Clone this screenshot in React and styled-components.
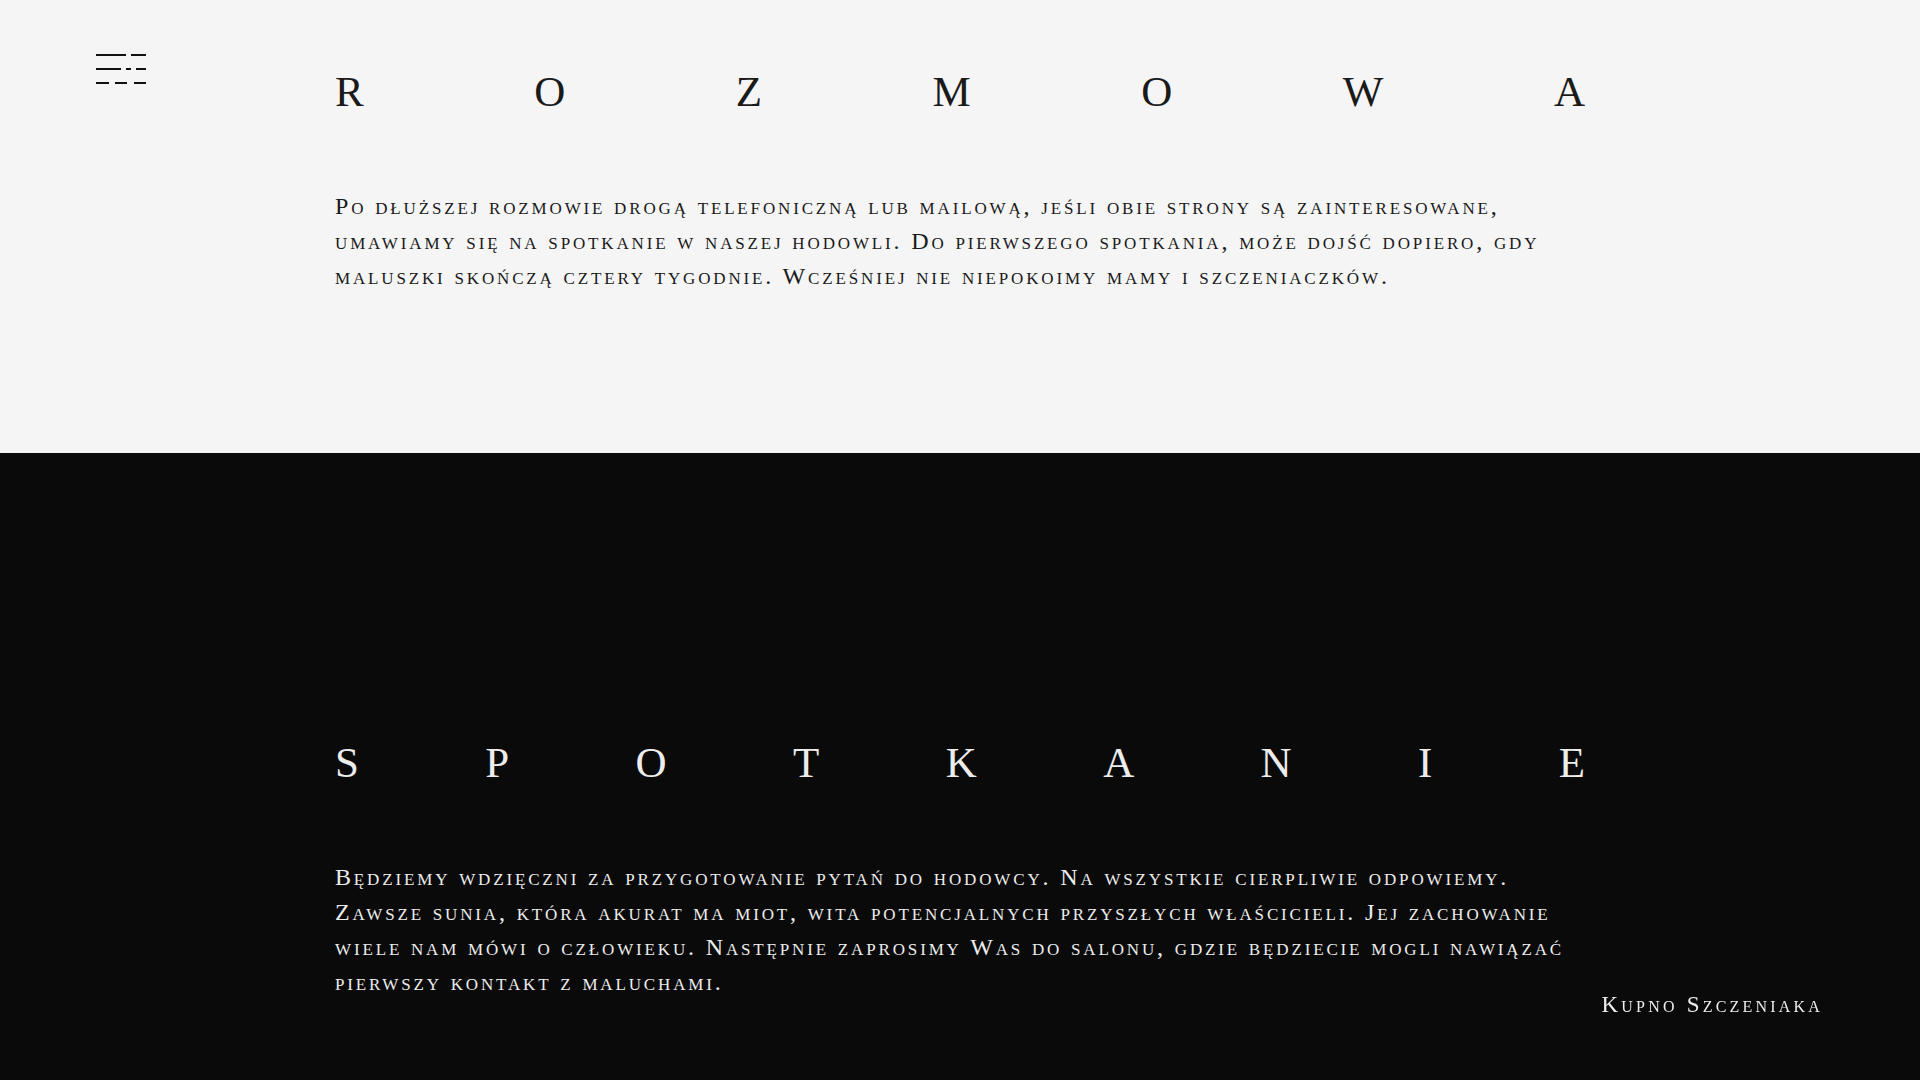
import React from "react";
import styled, { createGlobalStyle } from "styled-components";

const Global = createGlobalStyle`
  html, body { margin: 0; padding: 0; }
  body {
    background: #f5f5f5;
    font-family: "Liberation Serif", "Times New Roman", serif;
  }
`;

const Page = styled.div`
  width: 100%;
  min-height: 1080px;
  display: flex;
  flex-direction: column;
`;

const Section = styled.section`
  background: ${(p) => (p.$dark ? "#0a0a0a" : "#f5f5f5")};
  color: ${(p) => (p.$dark ? "#ededed" : "#1a1a1a")};
  padding: ${(p) => p.$pad};
  flex: ${(p) => (p.$grow ? 1 : "none")};
`;

const Container = styled.div`
  margin-left: 335px;
  width: 1250px;
  display: flex;
  flex-direction: column;
  gap: 75px;
`;

const Heading = styled.h2`
  margin: 0;
  display: flex;
  justify-content: space-between;
  font-size: 43px;
  line-height: 44px;
  font-weight: 400;
  text-transform: uppercase;
`;

const Text = styled.p`
  margin: 0;
  font-size: 24px;
  line-height: 35px;
  font-variant: small-caps;
  letter-spacing: 2.85px;
`;

const Line = styled.span`
  display: block;
  white-space: nowrap;
`;

const MenuButton = styled.button`
  position: fixed;
  left: 96px;
  top: 54px;
  width: 50px;
  height: 31px;
  padding: 0;
  border: 0;
  background: none;
  cursor: pointer;
  display: block;
`;

const SideLabel = styled.a`
  position: fixed;
  right: 97px;
  bottom: 64px;
  font-size: 23px;
  line-height: 22px;
  font-variant: small-caps;
  letter-spacing: 3.2px;
  color: #ededed;
  text-decoration: none;
`;

const MenuIcon = () => (
  <svg width="50" height="31" viewBox="0 0 50 31" fill="none" stroke="#111" strokeWidth="2">
    <line x1="0" y1="1" x2="30" y2="1" />
    <line x1="35" y1="1" x2="50" y2="1" />
    <line x1="0" y1="15" x2="25" y2="15" />
    <line x1="30" y1="15" x2="35" y2="15" />
    <line x1="40" y1="15" x2="50" y2="15" />
    <line x1="0" y1="29" x2="13" y2="29" />
    <line x1="19" y1="29" x2="31" y2="29" />
    <line x1="38" y1="29" x2="50" y2="29" />
  </svg>
);

const Spread = ({ word }) => (
  <Heading>
    {word.split("").map((c, i) => (
      <span key={i}>{c}</span>
    ))}
  </Heading>
);

const rozmowa = [
  "Po dłuższej rozmowie drogą telefoniczną lub mailową, jeśli obie strony są zainteresowane,",
  "umawiamy się na spotkanie w naszej hodowli. Do pierwszego spotkania, może dojść dopiero, gdy",
  "maluszki skończą cztery tygodnie. Wcześniej nie niepokoimy mamy i szczeniaczków.",
];

const spotkanie = [
  "Będziemy wdzięczni za przygotowanie pytań do hodowcy. Na wszystkie cierpliwie odpowiemy.",
  "Zawsze sunia, która akurat ma miot, wita potencjalnych przyszłych właścicieli. Jej zachowanie",
  "wiele nam mówi o człowieku. Następnie zaprosimy Was do salonu, gdzie będziecie mogli nawiązać",
  "pierwszy kontakt z maluchami.",
];

export default function App() {
  return (
    <Page>
      <Global />
      <MenuButton aria-label="Menu">
        <MenuIcon />
      </MenuButton>
      <Section $pad="70px 0 159px">
        <Container>
          <Spread word="Rozmowa" />
          <Text>
            {rozmowa.map((l, i) => (
              <Line key={i}>{l}</Line>
            ))}
          </Text>
        </Container>
      </Section>
      <Section $dark $grow $pad="288px 0 71px">
        <Container>
          <Spread word="Spotkanie" />
          <Text>
            {spotkanie.map((l, i) => (
              <Line key={i}>{l}</Line>
            ))}
          </Text>
        </Container>
      </Section>
      <SideLabel href="#">Kupno Szczeniaka</SideLabel>
    </Page>
  );
}
